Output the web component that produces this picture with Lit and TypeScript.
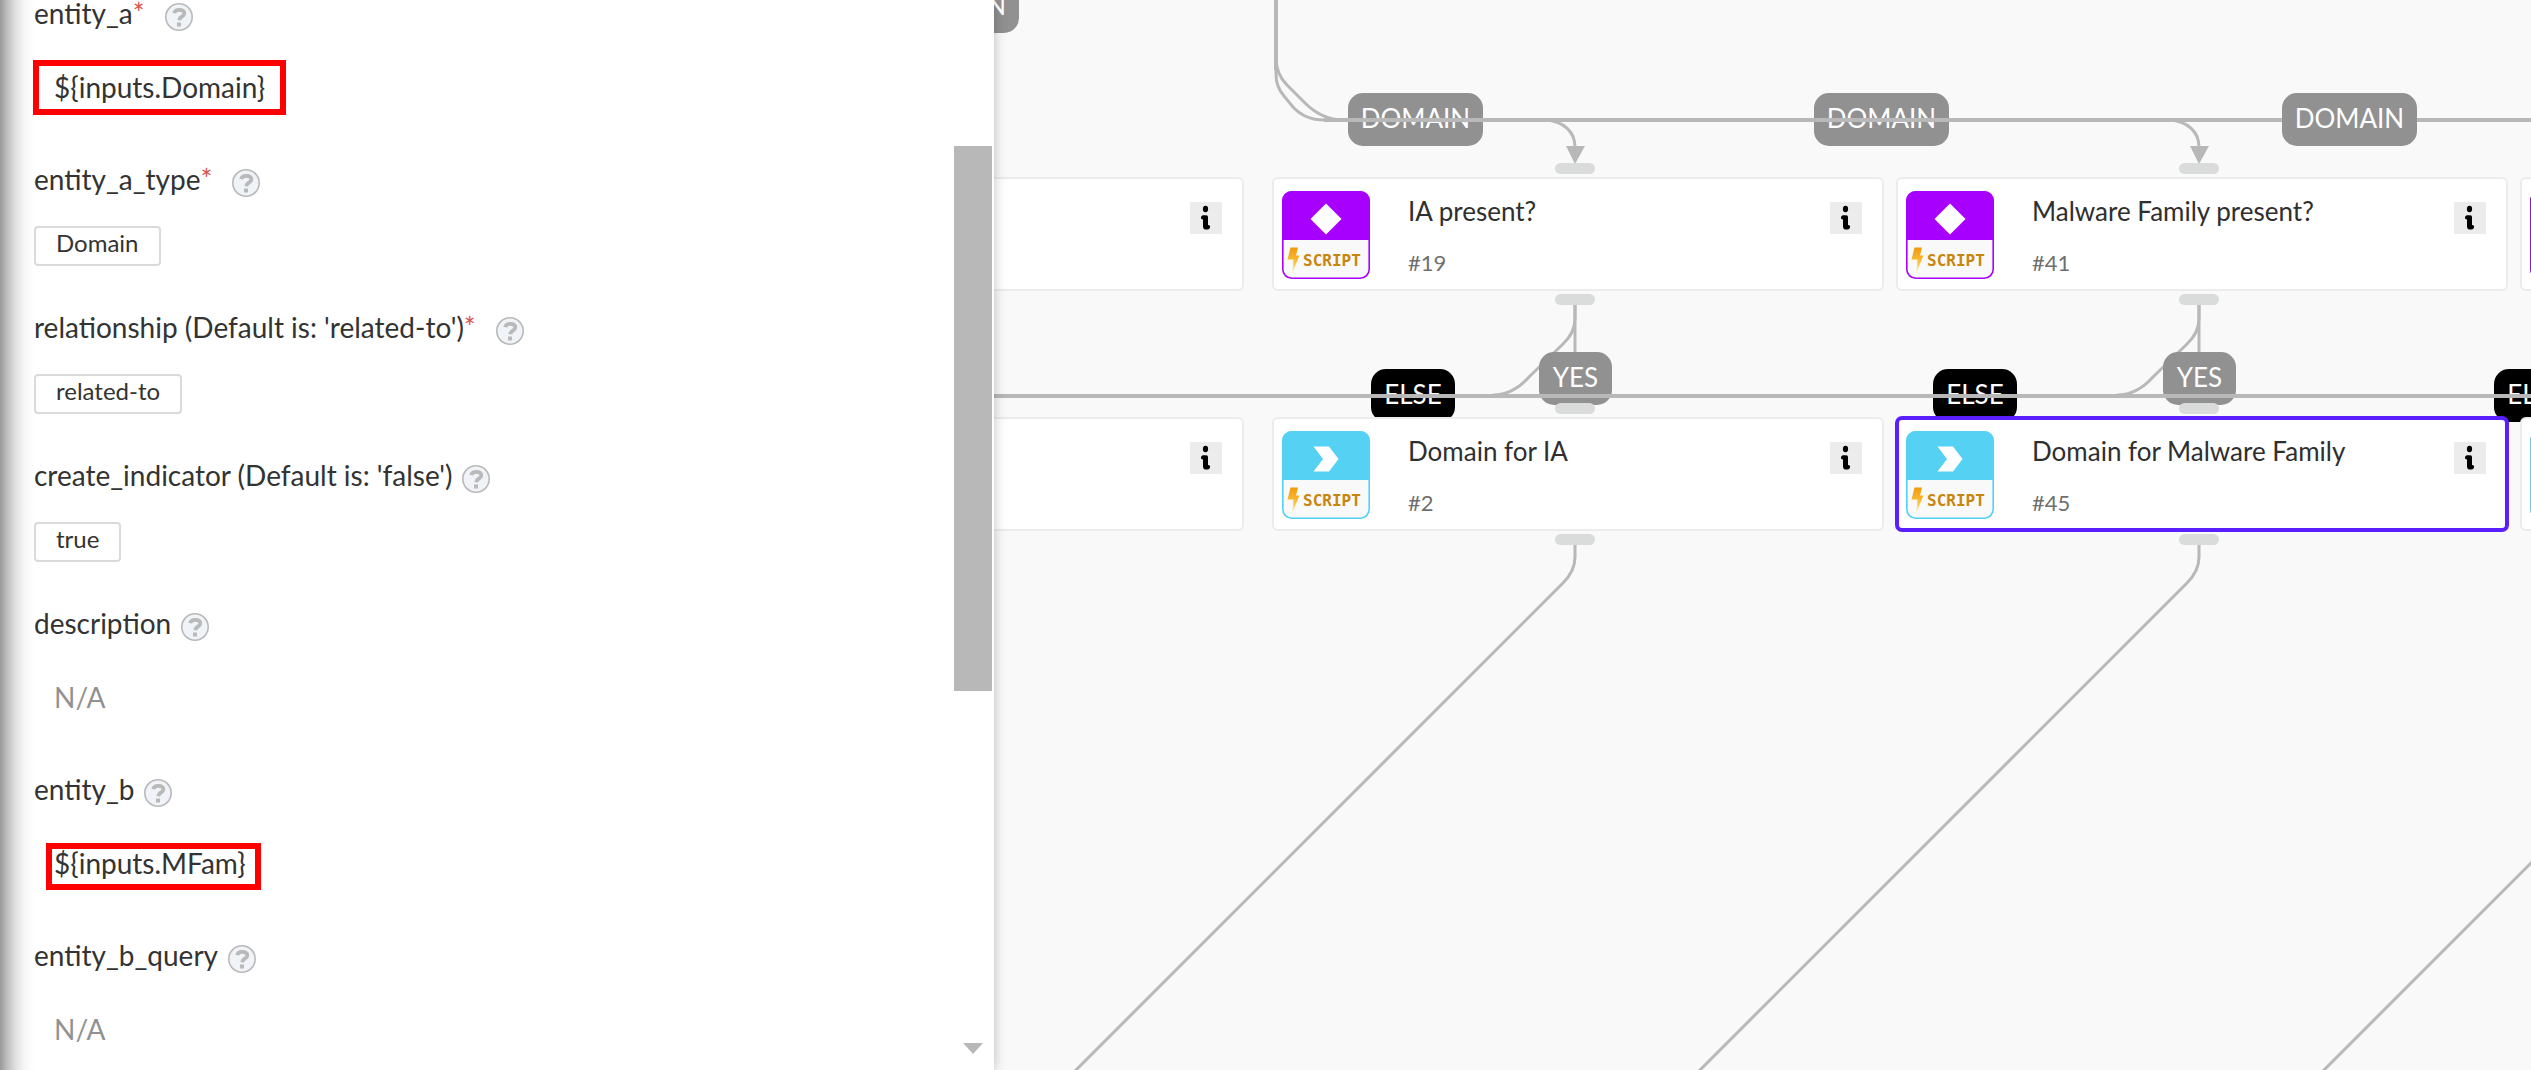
import { LitElement, html, svg, css } from "lit";
import { customElement, property } from "lit/decorators.js";
import { classMap } from "lit/directives/class-map.js";
import { styleMap } from "lit/directives/style-map.js";

const FONT = css`Lato, "Open Sans", sans-serif`;

type Field = {
  name: string;
  required?: boolean;
  kind: "text" | "tag";
  value: string;
  mark?: "wide" | "tight";
};

const FIELDS: Field[] = [
  { name: "entity_a", required: true, kind: "text", value: "\${inputs.Domain}", mark: "wide" },
  { name: "entity_a_type", required: true, kind: "tag", value: "Domain" },
  { name: "relationship (Default is: 'related-to')", required: true, kind: "tag", value: "related-to" },
  { name: "create_indicator (Default is: 'false')", kind: "tag", value: "true" },
  { name: "description", kind: "text", value: "" },
  { name: "entity_b", kind: "text", value: "\${inputs.MFam}", mark: "tight" },
  { name: "entity_b_query", kind: "text", value: "" },
];

@customElement("argument-field")
class ArgumentField extends LitElement {
  @property({ attribute: false }) field!: Field;

  static styles = css`
    :host { display: block; }
    .label { display: flex; align-items: flex-start; height: 40px; font-size: 28px; line-height: 32px; color: #333; white-space: nowrap; }
    .star { color: #d9534f; margin-right: 10px; }
    .help { display: block; width: 28px; height: 28px; margin: 6px 0 0 10px; padding: 0; border: 0; background: none; }
    .help svg { display: block; }
    .value { display: flex; align-items: center; height: 48px; margin: 26px 0 52px; }
    .text { font-size: 28px; line-height: 32px; color: #333; padding-left: 20px; }
    .empty { color: #919191; }
    .mark { position: relative; }
    .mark::after { content: ""; position: absolute; border: 6px solid #f00; }
    .wide::after { inset: -11px -21px -12px -1px; }
    .tight::after { inset: -4px -15px -11px 12px; }
    .tagrow { height: 40px; margin: 23px 0 45px; }
    .tag { box-sizing: border-box; height: 40px; padding: 0 20px 6px; border: 2px solid #dadada; border-radius: 4px; background: #fff; font: 24px/30px ${FONT}; color: #333; }
  `;

  render() {
    const f = this.field;
    const marked = { text: true, empty: !f.value, mark: !!f.mark, wide: f.mark === "wide", tight: f.mark === "tight" };
    return html`
      <div class="label">
        <span>${f.name}</span>${f.required ? html`<span class="star">*</span>` : null}
        <button class="help" aria-label="Help">
          <svg width="28" height="28" viewBox="0 0 28 28">
            <circle cx="14" cy="14" r="13.2" fill="#f0f3f7" stroke="#b9b9b9" stroke-width="1.6" />
            <path d="M9.200 10.200C9.800 7.400 11.600 6.800 14.200 6.800C17.200 6.800 19.300 8 19.300 10.400C19.300 13.600 14.800 13.200 14.200 17.200" fill="none" stroke="#b9b9b9" stroke-width="3.8" />
            <rect x="12" y="19.500" width="4" height="4" fill="#b9b9b9" />
          </svg>
        </button>
      </div>
      ${f.kind === "tag"
        ? html`<div class="value tagrow"><button class="tag">${f.value}</button></div>`
        : html`<div class="value"><span class=${classMap(marked)}>${f.value || "N/A"}</span></div>`}
    `;
  }
}

@customElement("task-card")
class TaskCard extends LitElement {
  @property() heading = "";
  @property() number = "";
  @property() kind: "condition" | "action" = "condition";
  @property({ type: Boolean }) selected = false;

  static styles = css`
    :host { display: block; }
    .card { box-sizing: border-box; display: flex; width: 612px; height: 114px; padding: 12px 20px 0 8px; background: #fff; border: 2px solid #ececec; border-radius: 6px; }
    .selected { outline: 4px solid #5a1fff; outline-offset: -3px; border-color: #5a1fff; }
    .icon { flex: none; width: 88px; height: 88px; }
    .body { flex: 1; margin-left: 38px; }
    .title { margin: 4px 0 0; font-size: 26px; line-height: 32px; font-weight: 400; color: #2f2f2f; white-space: nowrap; }
    .num { margin-top: 22px; font-size: 22px; line-height: 28px; color: #6f6f6f; }
    .info { width: 32px; height: 32px; margin-top: 11px; padding: 0; border: 0; background: #ececec; }
    .info svg { display: block; }
    .script { font: 700 16px "DejaVu Sans Mono", monospace; }
  `;

  render() {
    const action = this.kind === "action";
    const color = action ? "#55d1f3" : "#a800ff";
    return html`
      <article class=${classMap({ card: true, selected: this.selected })}>
        <svg class="icon" viewBox="0 0 88 88" aria-hidden="true">
          <defs>
            <linearGradient id="bolt" x1="0" y1="0" x2="0" y2="1">
              <stop offset="0" stop-color="#f09a0a" />
              <stop offset="0.5" stop-color="#f7bb35" />
              <stop offset="1" stop-color="#fff08a" />
            </linearGradient>
          </defs>
          <rect x="0.8" y="0.8" width="86.4" height="86.4" rx="9" fill="#f9f9f9" stroke=${color} stroke-width="1.6" />
          <path d="M0 49V10A10 10 0 0 1 10 0H78A10 10 0 0 1 88 10V49Z" fill=${color} />
          ${action
            ? svg`<path d="M31.500 15.500H47L56.500 28L47 40.500H31.500L41 28Z" fill="#fff" />`
            : svg`<path d="M44 12.500L59.500 28L44 43.500L28.500 28Z" fill="#fff" />`}
          <path d="M8.500 56.500H16L14 64.500H17.500L10.500 81.500L11.500 68.500H5.500Z" fill="url(#bolt)" />
          <text class="script" x="21" y="75" fill="#c8860d">SCRIPT</text>
        </svg>
        <div class="body">
          <h3 class="title">${this.heading}</h3>
          <div class="num">${this.number}</div>
        </div>
        <button class="info" aria-label="Task details">
          <svg width="32" height="32" viewBox="0 0 32 32">
            <ellipse cx="15.500" cy="7" rx="2.600" ry="3.200" />
            <path d="M11 15.600C11 13.500 12.500 13.200 14 13.200H16C17.600 13.200 18 14 18 15.500V23C19.500 22.800 20.300 24 20 25.500C19.600 27.300 18 27.600 16.200 27.600C14 27.600 13 26.500 13 24.500V17.500C11.800 17.500 11 17 11 15.600Z" />
          </svg>
        </button>
      </article>
    `;
  }
}

type Card = { x: number; y: number; kind: string; heading: string; number: string; selected?: boolean };

// Canvas coordinates are measured from the left edge of the playbook canvas.
const CARDS: Card[] = [
  { x: -362, y: 177, kind: "condition", heading: "", number: "" },
  { x: 278, y: 177, kind: "condition", heading: "IA present?", number: "#19" },
  { x: 902, y: 177, kind: "condition", heading: "Malware Family present?", number: "#41" },
  { x: 1526, y: 177, kind: "condition", heading: "", number: "" },
  { x: -362, y: 417, kind: "action", heading: "", number: "" },
  { x: 278, y: 417, kind: "action", heading: "Domain for IA", number: "#2" },
  { x: 902, y: 417, kind: "action", heading: "Domain for Malware Family", number: "#45", selected: true },
  { x: 1526, y: 417, kind: "action", heading: "", number: "" },
];

type Pill = { x: number; y: number; w: number; text: string; dark?: boolean; front?: boolean };

const PILLS: Pill[] = [
  { x: -110, y: -20, w: 135, text: "DOMAIN" },
  { x: 354, y: 93, w: 135, text: "DOMAIN" },
  { x: 820, y: 93, w: 135, text: "DOMAIN" },
  { x: 1288, y: 93, w: 135, text: "DOMAIN", front: true },
  { x: 377, y: 369, w: 84, text: "ELSE", dark: true },
  { x: 939, y: 369, w: 84, text: "ELSE", dark: true },
  { x: 1500, y: 369, w: 84, text: "ELSE", dark: true },
  { x: 545, y: 352, w: 73, text: "YES" },
  { x: 1169, y: 352, w: 73, text: "YES" },
];

const COLUMNS = [581, 1205, 1829];

@customElement("app-root")
class AppRoot extends LitElement {
  static styles = css`
    :host { display: block; font-family: ${FONT}; }
    .page { display: flex; height: 100vh; overflow: hidden; background: #f9f9f9; }
    .panel { position: relative; z-index: 2; display: flex; flex: none; width: 994px; background: #fff; box-shadow: 0 0 12px rgba(0, 0, 0, 0.25); }
    .edge { flex: none; width: 34px; background: linear-gradient(90deg, #999 0, #bcbcbc 20%, #e0e0e0 45%, #f6f6f6 72%, #fff 100%); }
    .fields { flex: 1; margin-top: -3px; }
    .bar { display: flex; flex-direction: column; align-items: center; justify-content: space-between; width: 38px; margin-right: 2px; }
    .thumb { width: 38px; height: 545px; margin-top: 146px; background: #b8b8b8; }
    .down { margin-bottom: 16px; }
    .canvas { position: relative; flex: 1; overflow: hidden; }
    .node, .pill, .port, .lines { position: absolute; }
    .lines { left: 0; top: 0; width: 100%; height: 100%; overflow: visible; pointer-events: none; }
    .pill { box-sizing: border-box; height: 53px; border-radius: 15px; background: #919191; color: #fff; font-size: 26px; line-height: 51px; text-align: center; }
    .dark { background: #000; }
    .port { width: 40px; height: 11px; border-radius: 6px; background: #dadcdb; }
  `;

  private pill(p: Pill) {
    const pos = { left: `${p.x}px`, top: `${p.y}px`, width: `${p.w}px` };
    return html`<div class=${classMap({ pill: true, dark: !!p.dark })} style=${styleMap(pos)}>${p.text}</div>`;
  }

  render() {
    return html`
      <main class="page">
        <aside class="panel">
          <div class="edge"></div>
          <div class="fields">${FIELDS.map((f) => html`<argument-field .field=${f}></argument-field>`)}</div>
          <div class="bar">
            <div class="thumb"></div>
            <svg class="down" width="20" height="11" viewBox="0 0 20 11"><path d="M0 0H20L10 11Z" fill="#b8b8b8" /></svg>
          </div>
        </aside>
        <section class="canvas">
          <svg class="lines" fill="none" stroke="#b8b8b8" stroke-width="3">
            ${COLUMNS.map(
              (x) => svg`
                <path d="M${x} 304V318Q${x} 333 ${x - 12} 344L${x - 46} 377Q${x - 62} 395 ${x - 82} 395" />
                <path d="M${x} 304V400" />`,
            )}
          </svg>
          ${PILLS.filter((p) => !p.front).map((p) => this.pill(p))}
          <svg class="lines" fill="none" stroke="#b8b8b8" stroke-width="3">
            <path d="M282 0V58Q282 74 293 85L311 103Q328 120 350 120" />
            <path d="M282 0V74Q282 87 290 96L299 107Q311 120 330 120" />
            <path d="M282 0V70M330 120H1600M0 396H1600" stroke-width="4" />
            ${COLUMNS.map(
              (x) => svg`
                <path d="M${x - 30} 120C${x - 10} 121 ${x} 133 ${x} 147" />
                <path d="M${x - 9} 146H${x + 10}L${x} 164Z" fill="#b8b8b8" stroke="none" />
                <path d="M${x} 545V557Q${x} 571 ${x - 12} 583L${x - 512} 1083" />`,
            )}
          </svg>
          ${PILLS.filter((p) => p.front).map((p) => this.pill(p))}
          ${COLUMNS.map((x) =>
            [163, 294, 403, 534].map(
              (y) => html`<div class="port" style=${styleMap({ left: `${x - 20}px`, top: `${y}px` })}></div>`,
            ),
          )}
          ${CARDS.map(
            (c) => html`<task-card class="node" style=${styleMap({ left: `${c.x}px`, top: `${c.y}px` })}
              .kind=${c.kind} .heading=${c.heading} .number=${c.number} .selected=${!!c.selected}></task-card>`,
          )}
        </section>
      </main>
    `;
  }
}
